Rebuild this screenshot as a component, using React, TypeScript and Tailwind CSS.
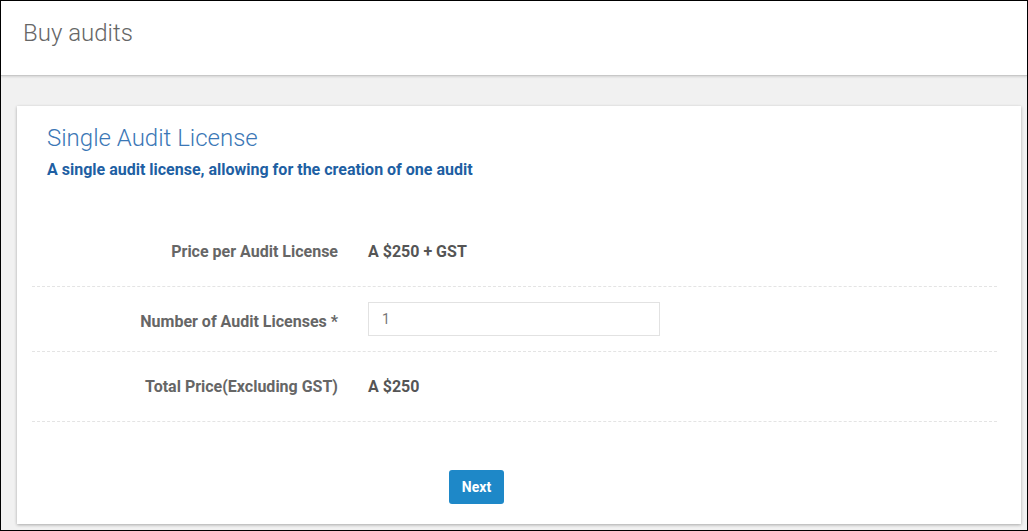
import React from "react";

function Row({ label, children, className, labelClass = "" }: { label: string; children: React.ReactNode; className: string; labelClass?: string }) {
  return (
    <div className={`flex items-center border-b border-dashed border-[#e4e4e4] ${className}`}>
      <div className={`w-[306px] pr-0 text-right text-[16px] font-bold text-[#666] ${labelClass}`}>{label}</div>
      <div className="ml-[30px] flex h-[34px] items-center text-[16px] font-bold text-[#555]">{children}</div>
    </div>
  );
}

export default function App() {
  return (
    <div
      className="flex h-[531px] w-[1028px] flex-col overflow-hidden border border-black bg-[#f1f1f1]"
      style={{ fontFamily: "Roboto, 'Liberation Sans', sans-serif" }}
    >
      <div className="flex h-[75px] shrink-0 items-center border-b border-[#c8c8c8] bg-white pb-[10px] pl-[22px] shadow-[0_1px_2px_rgba(0,0,0,0.12)]">
        <h1 className="text-[24px] font-light text-[#666]">Buy audits</h1>
      </div>
      <div className="flex flex-1 flex-col pl-[16px] pr-[6px] pt-[30px] pb-[6px]">
        <div className="flex flex-1 flex-col bg-white pt-[16px] shadow-[0_1px_3px_rgba(0,0,0,0.3)]">
          <div className="pl-[30px]">
            <h2 className="text-[24px] leading-[32px] font-light text-[#3b77b6]">Single Audit License</h2>
            <p className="mt-[5px] text-[16px] leading-[22px] font-bold text-[#1e5fa3]">A single audit license, allowing for the creation of one audit</p>
          </div>
          <div className="mt-[38px] ml-[15px] mr-[24px]">
            <Row label="Price per Audit License" className="pt-[16px] pb-[17px]">
              A $250 + GST
            </Row>
            <Row label="Number of Audit Licenses *" className="pt-[15px] pb-[15px]" labelClass="mt-[6px]">
              <input
                defaultValue="1"
                className="h-[34px] w-[292px] border border-[#e2e2e2] px-[13px] text-[14px] font-normal text-[#777] outline-none"
              />
            </Row>
            <Row label="Total Price(Excluding GST)" className="pt-[18px] pb-[17px]">
              A $250
            </Row>
          </div>
          <div className="mt-[48px] pl-[432px]">
            <button className="h-[34px] w-[55px] rounded-[3px] bg-[#1e88c8] text-[14px] font-bold text-white">Next</button>
          </div>
        </div>
      </div>
    </div>
  );
}
